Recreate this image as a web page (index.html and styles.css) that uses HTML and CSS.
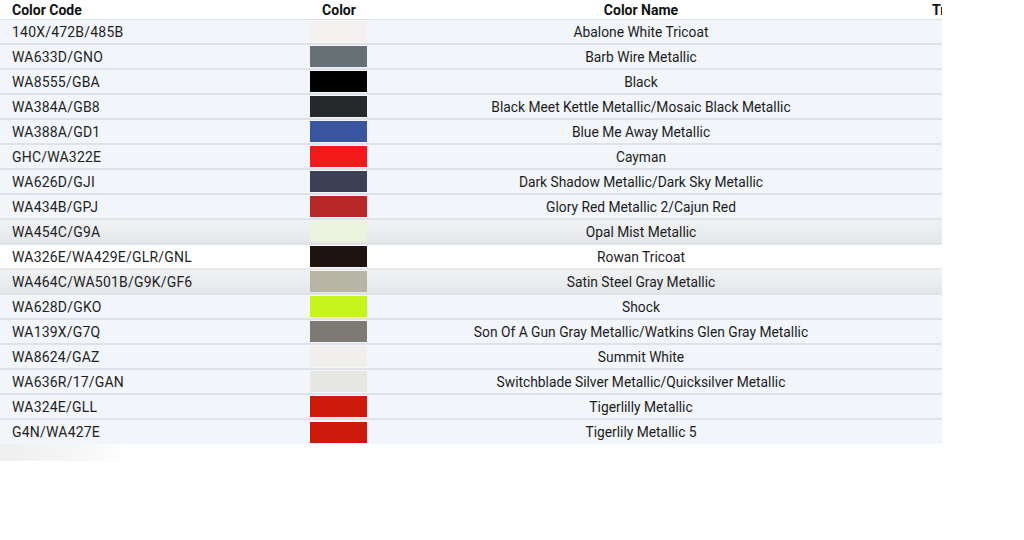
FILE: index.html
```html
<!DOCTYPE html>
<html>
<head>
<meta charset="utf-8">
<link rel="stylesheet" href="styles.css">
</head>
<body>
<div class="wrap">
  <table class="colors">
    <colgroup>
      <col class="c-code"><col class="c-swatch"><col class="c-name"><col class="c-extra">
    </colgroup>
    <thead>
      <tr><th class="h-code">Color Code</th><th>Color</th><th>Color Name</th><th class="h-extra">Tricoat</th></tr>
    </thead>
    <tbody>
      <tr><td class="code">140X/472B/485B</td><td><span class="sw" style="background:#f2f1ef"></span></td><td class="name">Abalone White Tricoat</td><td></td></tr>
      <tr><td class="code">WA633D/GNO</td><td><span class="sw" style="background:#677074"></span></td><td class="name">Barb Wire Metallic</td><td></td></tr>
      <tr><td class="code">WA8555/GBA</td><td><span class="sw" style="background:#000000"></span></td><td class="name">Black</td><td></td></tr>
      <tr><td class="code">WA384A/GB8</td><td><span class="sw" style="background:#25292c"></span></td><td class="name">Black Meet Kettle Metallic/Mosaic Black Metallic</td><td></td></tr>
      <tr><td class="code">WA388A/GD1</td><td><span class="sw" style="background:#3a55a0"></span></td><td class="name">Blue Me Away Metallic</td><td></td></tr>
      <tr><td class="code">GHC/WA322E</td><td><span class="sw" style="background:#f21a1a"></span></td><td class="name">Cayman</td><td></td></tr>
      <tr><td class="code">WA626D/GJI</td><td><span class="sw" style="background:#3b4055"></span></td><td class="name">Dark Shadow Metallic/Dark Sky Metallic</td><td></td></tr>
      <tr><td class="code">WA434B/GPJ</td><td><span class="sw" style="background:#b72828"></span></td><td class="name">Glory Red Metallic 2/Cajun Red</td><td></td></tr>
      <tr class="grad"><td class="code">WA454C/G9A</td><td><span class="sw" style="background:#eaf3de"></span></td><td class="name">Opal Mist Metallic</td><td></td></tr>
      <tr class="white"><td class="code">WA326E/WA429E/GLR/GNL</td><td><span class="sw" style="background:#1e1410"></span></td><td class="name">Rowan Tricoat</td><td></td></tr>
      <tr class="grad"><td class="code">WA464C/WA501B/G9K/GF6</td><td><span class="sw" style="background:#b7b5a5"></span></td><td class="name">Satin Steel Gray Metallic</td><td></td></tr>
      <tr><td class="code">WA628D/GKO</td><td><span class="sw" style="background:#c6f41c"></span></td><td class="name">Shock</td><td></td></tr>
      <tr><td class="code">WA139X/G7Q</td><td><span class="sw" style="background:#7d7a74"></span></td><td class="name">Son Of A Gun Gray Metallic/Watkins Glen Gray Metallic</td><td></td></tr>
      <tr><td class="code">WA8624/GAZ</td><td><span class="sw" style="background:#f0efeb"></span></td><td class="name">Summit White</td><td></td></tr>
      <tr><td class="code">WA636R/17/GAN</td><td><span class="sw" style="background:#e6e6e2"></span></td><td class="name">Switchblade Silver Metallic/Quicksilver Metallic</td><td></td></tr>
      <tr><td class="code">WA324E/GLL</td><td><span class="sw" style="background:#cc1a0d"></span></td><td class="name">Tigerlilly Metallic</td><td></td></tr>
      <tr class="last"><td class="code">G4N/WA427E</td><td><span class="sw" style="background:#cc1a0d"></span></td><td class="name">Tigerlily Metallic 5</td><td></td></tr>
    </tbody>
  </table>
  <div class="shade"></div>
</div>
</body>
</html>
```
FILE: styles.css
```css
html, body {
  margin: 0;
  padding: 0;
  background: #ffffff;
}
body {
  font-family: "Roboto", "Liberation Sans", sans-serif;
  color: #1f1f1f;
}
.wrap {
  width: 942px;
  overflow: hidden;
}
.colors {
  border-collapse: collapse;
  table-layout: fixed;
  width: 1150px;
}
.c-code { width: 296px; }
.c-swatch { width: 86px; }
.c-name { width: 518px; }
.c-extra { width: 250px; }
thead th {
  height: 19px;
  padding: 0;
  font-size: 14px;
  font-weight: 700;
  color: #111;
  text-align: center;
  vertical-align: middle;
  background: #fff;
  border-bottom: 1px solid #dcdfe3;
}
thead th.h-code {
  text-align: left;
  padding-left: 12px;
}
thead th.h-extra {
  text-align: left;
  padding-left: 32px;
}
tbody tr {
  background: #f2f5f9;
}
tbody td {
  height: 23px;
  padding: 0;
  border-bottom: 2px solid #dfe3e7;
  font-size: 14px;
  vertical-align: middle;
  text-align: center;
}
tbody tr.last td {
  border-bottom: none;
  height: 24px;
}
tbody tr.grad {
  background: linear-gradient(#f1f2f4, #e3e6e9);
}
tbody tr.white {
  background: #ffffff;
}
tbody tr.white td {
  border-bottom-color: #e6e8eb;
}
td.code {
  text-align: left;
  padding-left: 12px;
  letter-spacing: 0.2px;
}
td.name {
  color: #1c1c1c;
  font-size: 13.8px;
}
.sw {
  display: block;
  width: 57px;
  height: 21px;
  margin: 0 auto 0 14px;
}
.shade {
  width: 130px;
  height: 17px;
  background: linear-gradient(to right, #efefef 0%, #f6f6f6 60%, rgba(255,255,255,0) 100%);
}
```
